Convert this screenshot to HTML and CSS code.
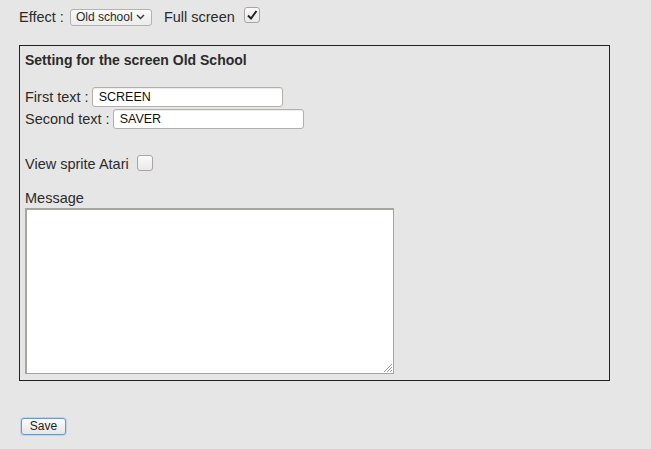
FILE: index.html
```html
<!DOCTYPE html>
<html>
<head>
<meta charset="utf-8">
<link rel="stylesheet" href="styles.css">
</head>
<body>
<div class="page">
  <div class="toprow">
    <span class="lbl">Effect :</span>
    <div class="select"><span>Old school</span>
      <svg width="9" height="6" viewBox="0 0 9 6"><path d="M1 1 L4.5 4.5 L8 1" fill="none" stroke="#333" stroke-width="1.4"/></svg>
    </div>
    <span class="lbl fs">Full screen</span>
    <div class="check checked">
      <svg width="14" height="14" viewBox="0 0 14 14"><path d="M3 7.5 L6 10.5 L11.5 3" fill="none" stroke="#222" stroke-width="2"/></svg>
    </div>
  </div>
  <div class="box">
    <div class="title">Setting for the screen Old School</div>
    <div class="field r1"><span class="lbl">First text :</span><div class="input">SCREEN</div></div>
    <div class="field r2"><span class="lbl">Second text :</span><div class="input">SAVER</div></div>
    <div class="field r3"><span class="lbl">View sprite Atari</span><div class="check"></div></div>
    <div class="msglbl">Message</div>
    <div class="textarea">
      <svg class="grip" width="12" height="12" viewBox="0 0 12 12"><path d="M11 3 L3 11 M11 6 L6 11 M11 9 L9 11" stroke="#999" stroke-width="1"/></svg>
    </div>
  </div>
  <div class="btnrow"><div class="btn">Save</div></div>
</div>
</body>
</html>
```
FILE: styles.css
```css
html, body { margin: 0; padding: 0; background: #e6e6e6; }
body { font-family: "Liberation Sans", Arial, sans-serif; font-size: 14.5px; color: #2b2b2b; width: 651px; height: 449px; overflow: hidden; }
.page { padding: 7px 0 0 19px; }
.toprow { display: flex; align-items: center; height: 20px; }
.lbl { white-space: nowrap; }
.select { margin-left: 6px; border: 1px solid #b5b2ad; border-radius: 3px; background: linear-gradient(#fafafa, #ebebeb); display: flex; align-items: center; justify-content: space-between; padding: 0 6px 0 5px; box-sizing: border-box; width: 82px; height: 17px; font-size: 12px; }
.fs { margin-left: 12px; }
.check { width: 16px; height: 16px; border: 1px solid #a9a6a1; border-radius: 3px; background: linear-gradient(#fafafa, #e9e9e9); box-sizing: border-box; display: flex; align-items: center; justify-content: center; }
.toprow .check { margin-left: 9px; margin-top: -5px; }
.box { margin-top: 18px; width: 591px; height: 336px; border: 1px solid #222; box-sizing: border-box; padding: 0 5px; }
.title { font-weight: bold; font-size: 14px; margin-top: 5px; height: 18px; line-height: 18px; }
.field { display: flex; align-items: center; }
.field .lbl { margin-right: 3px; }
.input { width: 191px; height: 20px; box-sizing: border-box; border: 1px solid #b3b0ab; border-radius: 3px; background: #fff; box-shadow: inset 0 1px 1px rgba(0,0,0,0.08); font-size: 12.5px; padding-left: 6px; line-height: 18px; color: #111; }
.r1 { margin-top: 18px; height: 20px; }
.r2 { margin-top: 2px; height: 20px; }
.r3 { margin-top: 25px; height: 20px; }
.r3 .check { margin-left: 5px; margin-top: -2px; }
.msglbl { margin-top: 16px; height: 16px; line-height: 16px; }
.textarea { position: relative; margin-top: 2px; width: 369px; height: 166px; box-sizing: border-box; border: 1px solid #a8a49f; border-top-width: 2px; border-left-width: 2px; background: #fff; }
.grip { position: absolute; right: 0; bottom: 0; }
.btnrow { margin-top: 37px; padding-left: 2px; }
.btn { width: 45px; height: 17px; box-sizing: border-box; border: 1px solid #5a9bdc; border-radius: 3px; background: linear-gradient(#fbfbfb, #e6e6e6); box-shadow: 0 0 0 1px rgba(90,155,220,0.25); font-size: 12px; text-align: center; line-height: 15px; color: #222; }
```
